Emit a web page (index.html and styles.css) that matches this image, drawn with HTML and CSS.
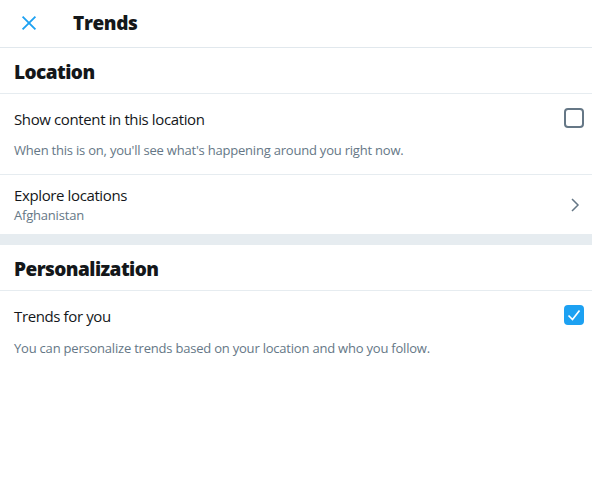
FILE: index.html
```html
<!DOCTYPE html>
<html>
<head>
<meta charset="utf-8">
<link rel="stylesheet" href="styles.css">
</head>
<body>
<div class="page">
  <header class="topbar">
    <button class="close" aria-label="Close">
      <svg viewBox="0 0 24 24" width="22" height="22"><path d="M5 5 L19 19 M19 5 L5 19" stroke="#1da1f2" stroke-width="2" fill="none" stroke-linecap="butt"/></svg>
    </button>
    <h1 class="title">Trends</h1>
  </header>

  <section class="section">
    <h2 class="section-title">Location</h2>
    <div class="row row-toggle">
      <div class="row-main">
        <span class="label">Show content in this location</span>
        <span class="box"></span>
      </div>
      <p class="desc">When this is on, you'll see what's happening around you right now.</p>
    </div>
    <div class="row row-link">
      <div class="link-text">
        <span class="label">Explore locations</span>
        <span class="sub">Afghanistan</span>
      </div>
      <svg class="chevron" viewBox="0 0 10 16" width="10" height="16"><path d="M2 2 L8 8 L2 14" stroke="#657786" stroke-width="1.5" fill="none"/></svg>
    </div>
  </section>

  <div class="band"></div>

  <section class="section">
    <h2 class="section-title">Personalization</h2>
    <div class="row row-toggle last">
      <div class="row-main">
        <span class="label">Trends for you</span>
        <span class="box checked">
          <svg viewBox="0 0 20 20" width="20" height="20"><path d="M4.5 10.5 L8.5 14.5 L15.5 5.5" stroke="#fff" stroke-width="1.7" fill="none"/></svg>
        </span>
      </div>
      <p class="desc">You can personalize trends based on your location and who you follow.</p>
    </div>
  </section>
</div>
</body>
</html>
```

FILE: styles.css
```css
* { box-sizing: border-box; }
html, body { margin: 0; padding: 0; background: #fff; }
body {
  font-family: "Open Sans", "Noto Sans", "Liberation Sans", sans-serif;
  color: #14171a;
}
.page { width: 592px; }
.topbar {
  height: 48px;
  display: flex;
  align-items: center;
  border-bottom: 1px solid #e1e8ed;
  padding-left: 14px;
  padding-bottom: 2px;
}
.close {
  width: 30px; height: 30px;
  border: 0; background: none; padding: 0;
  display: flex; align-items: center; justify-content: center;
  margin-right: 29px;
}
.title {
  margin: 0;
  font-size: 19px;
  font-weight: 800;
  line-height: 24px;
  letter-spacing: -0.35px;
}
.section-title {
  margin: 0;
  font-size: 19px;
  font-weight: 800;
  line-height: 24px;
  letter-spacing: -0.55px;
  padding: 12px 14px 9px;
  border-bottom: 1px solid #e6ecf0;
}
.row { padding: 0 8px 0 14px; border-bottom: 1px solid #e6ecf0; }
.row.last { border-bottom: 0; }
.row-toggle { padding-top: 15px; padding-bottom: 15px; }
.row-main {
  display: flex; align-items: center; justify-content: space-between;
  height: 20px;
}
.label { font-size: 15px; line-height: 20px; letter-spacing: -0.38px; }
.box {
  width: 20px; height: 20px;
  border: 2px solid #657786;
  border-radius: 4px;
  display: flex; align-items: center; justify-content: center;
  margin-top: -2px;
}
.box.checked { background: #1da1f2; border-color: #1da1f2; }
.box.checked svg { flex: none; }
.desc {
  margin: 12px 0 0;
  font-size: 13px;
  line-height: 18px;
  letter-spacing: -0.21px;
  color: #657786;
}
.last .desc { margin-top: 13px; }
.row-link {
  display: flex; align-items: center; justify-content: space-between;
  padding-top: 10px; padding-bottom: 10px;
  padding-right: 12px;
}
.link-text { display: flex; flex-direction: column; }
.sub { font-size: 13px; line-height: 18px; color: #657786; letter-spacing: -0.2px; margin-top: 1px; }
.band { height: 10px; background: #e6ecf0; }
```
